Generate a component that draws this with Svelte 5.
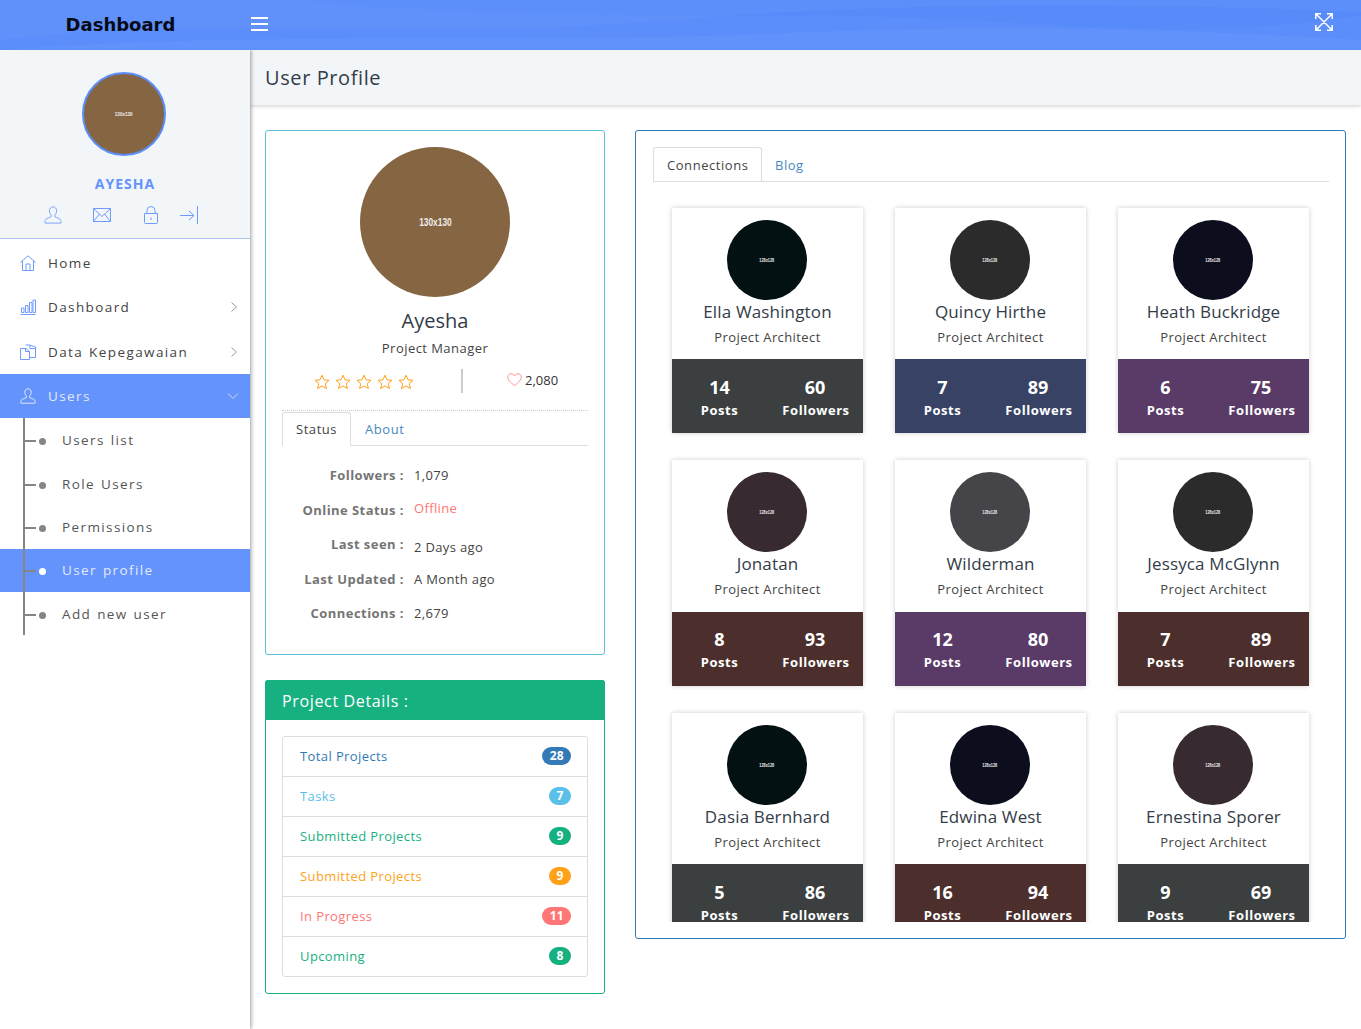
<script>
	const menu = [
		{ label: 'Home', icon: 'home' },
		{ label: 'Dashboard', icon: 'chart', arrow: true },
		{ label: 'Data Kepegawaian', icon: 'docs', arrow: true }
	];
	const subMenu = ['Users list', 'Role Users', 'Permissions', 'User profile', 'Add new user'];

	const info = [
		{ label: 'Followers :', value: '1,079' },
		{ label: 'Online Status :', value: 'Offline', cls: 'offline' },
		{ label: 'Last seen :', value: '2 Days ago', cls: 'low' },
		{ label: 'Last Updated :', value: 'A Month ago' },
		{ label: 'Connections :', value: '2,679' }
	];

	const projects = [
		{ label: 'Total Projects', count: 28, color: '#337ab7' },
		{ label: 'Tasks', count: 7, color: '#5bc0e8' },
		{ label: 'Submitted Projects', count: 9, color: '#17b081' },
		{ label: 'Submitted Projects', count: 9, color: '#ffa11a' },
		{ label: 'In Progress', count: 11, color: '#ff7676' },
		{ label: 'Upcoming', count: 8, color: '#17b081' }
	];

	const grey = '#3b3f40';
	const navy = '#374265';
	const plum = '#5a3a67';
	const brown = '#4c2f2c';
	const people = [
		{ name: 'Ella Washington', avatar: '#031112', posts: 14, followers: 60, bg: grey },
		{ name: 'Quincy Hirthe', avatar: '#2b2b2b', posts: 7, followers: 89, bg: navy },
		{ name: 'Heath Buckridge', avatar: '#0c0e1e', posts: 6, followers: 75, bg: plum },
		{ name: 'Jonatan', avatar: '#372a30', posts: 8, followers: 93, bg: brown },
		{ name: 'Wilderman', avatar: '#454449', posts: 12, followers: 80, bg: plum },
		{ name: 'Jessyca McGlynn', avatar: '#2b2b2b', posts: 7, followers: 89, bg: brown },
		{ name: 'Dasia Bernhard', avatar: '#031112', posts: 5, followers: 86, bg: grey },
		{ name: 'Edwina West', avatar: '#0c0e1e', posts: 16, followers: 94, bg: brown },
		{ name: 'Ernestina Sporer', avatar: '#372a30', posts: 9, followers: 69, bg: grey }
	];
</script>

{#snippet star()}
	<svg class="star" viewBox="0 0 16 16" width="16" height="16">
		<path d="M8 1.2l2 4.6 5 .5-3.8 3.3 1.2 4.9L8 12l-4.4 2.5 1.2-4.9L1 6.300l5-.5z" />
	</svg>
{/snippet}

{#snippet userIcon(size)}
	<svg class="line" viewBox="0 0 20 20" width={size} height={size}>
		<path d="M10 1c-2.600 0-4 1.900-4 4.300 0 2 .9 3.700 2 4.700v1.900c-1.800 1-6.300 2-6.800 4.200-.2.800 0 2.900 0 2.900h17.600s.2-2.100 0-2.900c-.5-2.200-5-3.200-6.800-4.200v-1.900c1.100-1 2-2.700 2-4.700 0-2.400-1.400-4.300-4-4.300z" />
	</svg>
{/snippet}

{#snippet menuIcon(name)}
	{#if name === 'home'}
		<svg class="line" viewBox="0 0 16 16" width="16" height="16">
			<path d="M.5 7.500L8 .8l7.500 6.700M2.500 6v9.500h11V6M6 15.500V9h4v6.500" />
		</svg>
	{:else if name === 'chart'}
		<svg class="line" viewBox="0 0 16 16" width="16" height="16">
			<path d="M.5 15.500h15M1.500 13.500V9h2.500v4.500zM5.500 13.500V6.500H8v7zM9.500 13.500V3.500H12v10zM13 13.500V1h2.500v12.500z" />
		</svg>
	{:else}
		<svg class="line" viewBox="0 0 16 16" width="16" height="16">
			<path d="M.5 4.500h5.500l3.500 3v8H.5zM5.500 1h4l6 2v10.500h-6M10 1v3.500h5.500M5.500 4.500V7.500h4" />
		</svg>
	{/if}
{/snippet}

<div class="page">
	<header class="topbar">
		<svg class="waves" viewBox="0 0 1361 50" preserveAspectRatio="none">
			<path d="M0 40C200 15 420 40 640 22S1100 0 1361 12V0H0z" fill="#fff" opacity="0.035" />
			<path d="M0 50C260 30 520 44 760 34s400-6 601 6v10z" fill="#fff" opacity="0.04" />
			<path d="M300 0C520 24 800 8 1000 22s260 6 361-6V0z" fill="#2f6cf5" opacity="0.05" />
		</svg>
		<div class="brand">Dashboard</div>
		<div class="burger"><span></span><span></span><span></span></div>
		<svg class="expand" viewBox="0 0 18 18" width="18" height="18">
			<path d="M1 1l16 16M17 1L1 17M.8 6V.8H6M12 .8h5.200V6M.8 12v5.200H6M17.200 12v5.200H12" />
		</svg>
	</header>

	<div class="main">
		<aside class="sidebar">
			<div class="userbox">
				<div class="avatar side-avatar"><span>130x130</span></div>
				<div class="username">AYESHA</div>
				<div class="usericons">
					{@render userIcon(18)}
					<svg class="line" viewBox="0 0 18 14" width="18" height="14">
						<path d="M.5.500h17v13H.5zM.5.500l8.500 8 8.500-8M.5 13.500l6-7.500M17.500 13.500l-6-7.500" />
					</svg>
					<svg class="line" viewBox="0 0 14 18" width="14" height="18">
						<path d="M.5 7.500h13v9a1 1 0 0 1-1 1h-11a1 1 0 0 1-1-1zM3 7.500V4.500a4 4 0 0 1 8 0v3M7 11.500v2.500" />
					</svg>
					<svg class="line" viewBox="0 0 18 18" width="18" height="18">
						<path d="M0 9.500h14M9 5l5 4.500-5 4.500M17.500 0v18" />
					</svg>
				</div>
			</div>
			<nav class="nav">
				{#each menu as item}
					<div class="nav-item">
						{@render menuIcon(item.icon)}
						<span>{item.label}</span>
						{#if item.arrow}
							<svg class="chev" viewBox="0 0 8 12" width="8" height="12"><path d="M1.500 1.500l5 4.500-5 4.500" /></svg>
						{/if}
					</div>
				{/each}
				<div class="nav-item active">
					{@render userIcon(16)}
					<span>Users</span>
					<svg class="chev down" viewBox="0 0 12 8" width="12" height="8"><path d="M1 1.500l5 5 5-5" /></svg>
				</div>
				<div class="sub">
					{#each subMenu as label}
						<div class="sub-item" class:current={label === 'User profile'}>
							<i class="tick"></i><i class="dot"></i>
							<span>{label}</span>
						</div>
					{/each}
				</div>
			</nav>
		</aside>

		<main class="content">
			<div class="titlebar"><h1>User Profile</h1></div>
			<div class="columns">
				<div class="left">
					<section class="card profile">
						<div class="avatar big-avatar"><span>130x130</span></div>
						<h2>Ayesha</h2>
						<p class="role">Project Manager</p>
						<div class="rating">
							<div class="stars">
								{#each [1, 2, 3, 4, 5] as _}
									{@render star()}
								{/each}
							</div>
							<div class="divider"></div>
							<div class="likes">
								<svg viewBox="0 0 16 16" width="15" height="15">
									<path d="M8 14.500C3 10.500.8 8.200.8 5.300.8 3.200 2.400 1.800 4.300 1.800c1.600 0 2.900.9 3.700 2.300.8-1.400 2.100-2.300 3.700-2.300 1.900 0 3.500 1.400 3.500 3.500 0 2.900-2.200 5.200-7.200 9.200z" />
								</svg>
								<span>2,080</span>
							</div>
						</div>
						<div class="tabs small">
							<div class="tab on">Status</div>
							<div class="tab">About</div>
						</div>
						<dl class="info">
							{#each info as row}
								<div class="info-row">
									<dt>{row.label}</dt>
									<dd class={row.cls}>{row.value}</dd>
								</div>
							{/each}
						</dl>
					</section>

					<section class="details">
						<div class="details-head">Project Details :</div>
						<div class="details-body">
							<ul>
								{#each projects as p}
									<li>
										<span style="color: {p.color}">{p.label}</span>
										<b style="background: {p.color}">{p.count}</b>
									</li>
								{/each}
							</ul>
						</div>
					</section>
				</div>

				<section class="connections">
					<div class="tabs">
						<div class="tab on">Connections</div>
						<div class="tab">Blog</div>
					</div>
					<div class="grid-clip">
						<div class="grid">
							{#each people as person}
								<article class="person">
									<div class="avatar person-avatar" style="background: {person.avatar}"><span>128x128</span></div>
									<h3>{person.name}</h3>
									<p>Project Architect</p>
									<div class="stats" style="background: {person.bg}">
										<div><strong>{person.posts}</strong><small>Posts</small></div>
										<div><strong>{person.followers}</strong><small>Followers</small></div>
									</div>
								</article>
							{/each}
						</div>
					</div>
				</section>
			</div>
		</main>
	</div>
</div>

<style>
	:global(body) {
		margin: 0;
		background: #fff;
		font-family: 'Open Sans', sans-serif;
		color: #313a46;
	}

	.page {
		width: 1361px;
		height: 1029px;
		overflow: hidden;
		display: flex;
		flex-direction: column;
	}

	.topbar {
		position: relative;
		z-index: 3;
		flex: none;
		height: 50px;
		background: #5b8dfb;
		display: flex;
		align-items: center;
		overflow: hidden;
	}

	.waves {
		position: absolute;
		inset: 0;
		width: 100%;
		height: 100%;
	}

	.brand {
		position: relative;
		width: 250px;
		box-sizing: border-box;
		text-align: center;
		padding-right: 9px;
		margin-top: -1px;
		font-family: 'DejaVu Sans', sans-serif;
		font-weight: 700;
		font-size: 18px;
		color: #060a17;
	}

	.burger {
		position: relative;
		width: 17px;
		margin-left: 1px;
		display: flex;
		flex-direction: column;
		gap: 4px;
		margin-top: -2px;
	}

	.burger span {
		height: 2px;
		background: #fff;
	}

	.expand {
		position: relative;
		margin-left: auto;
		margin-right: 28px;
		margin-top: -6px;
		fill: none;
		stroke: #fff;
		stroke-width: 1.5;
	}

	.main {
		flex: 1;
		display: flex;
		min-height: 0;
	}

	.sidebar {
		position: relative;
		z-index: 2;
		flex: none;
		width: 250px;
		background: #fff;
		box-shadow: 1px 0 4px rgba(0, 0, 0, 0.4);
	}

	.userbox {
		height: 189px;
		box-sizing: border-box;
		background: #f3f6f9;
		border-bottom: 1px solid #a9c0ec;
		padding-top: 22px;
		display: flex;
		flex-direction: column;
		align-items: center;
	}

	.avatar {
		flex: none;
		border-radius: 50%;
		display: flex;
		align-items: center;
		justify-content: center;
		box-sizing: border-box;
		color: #eee;
		background: #866642;
		font-family: 'Liberation Sans', sans-serif;
		font-weight: 700;
	}

	.avatar span {
		transform: scaleX(0.76);
	}

	.side-avatar {
		width: 84px;
		height: 84px;
		border: 2px solid #5b8dfb;
		font-size: 6px;
		margin-left: -2px;
	}

	.username {
		margin-top: 18px;
		font-weight: 700;
		font-size: 14px;
		line-height: 19px;
		letter-spacing: 1px;
		color: #6393fb;
	}

	.usericons {
		align-self: stretch;
		display: flex;
		align-items: center;
		padding-left: 44px;
		height: 18px;
		margin-top: 13px;
	}

	.usericons :global(svg:nth-child(2)) {
		margin-left: 31px;
	}

	.usericons :global(svg:nth-child(3)) {
		margin-left: 33px;
	}

	.usericons :global(svg:nth-child(4)) {
		margin-left: 22px;
	}

	.line {
		flex: none;
		fill: none;
		stroke: #6f9bfb;
		stroke-width: 1;
	}

	.nav {
		padding-top: 2px;
	}

	.nav-item {
		height: 44.3px;
		display: flex;
		align-items: center;
		padding: 0 12px 0 20px;
		font-size: 13.500px;
		letter-spacing: 1.400px;
		word-spacing: 1px;
		color: #444;
	}

	.nav-item span {
		margin-left: 12px;
	}

	.chev {
		margin-left: auto;
		fill: none;
		stroke: #999;
		stroke-width: 1;
	}

	.nav-item.active {
		background: #6493fb;
		color: #e3e9fb;
	}

	.nav-item.active .line {
		stroke: #fff;
	}

	.chev.down {
		stroke: #cfdcfb;
		margin-right: -1px;
	}

	.sub {
		position: relative;
		padding-top: 0.400px;
	}

	.sub::before {
		content: '';
		position: absolute;
		z-index: 1;
		left: 23px;
		top: 0;
		bottom: 1px;
		width: 2px;
		background: #858585;
	}

	.sub-item {
		height: 43.4px;
		display: flex;
		align-items: center;
		padding-left: 24px;
		font-size: 13.500px;
		letter-spacing: 1.400px;
		word-spacing: 1px;
		color: #555;
	}

	.sub-item span {
		margin-left: 16px;
	}

	.tick {
		width: 12px;
		height: 1px;
		border-top: 2px solid #858585;
		margin-top: 2px;
		box-sizing: border-box;
	}

	.dot {
		width: 7px;
		height: 7px;
		margin-left: 3px;
		margin-top: 3px;
		border-radius: 50%;
		background: #858585;
	}

	.sub-item.current {
		background: #6493fb;
		color: #e3e9fb;
		position: relative;
	}

	.sub-item.current .dot {
		background: #fff;
	}

	.content {
		flex: 1;
		min-width: 0;
	}

	.titlebar {
		height: 55px;
		background: #f3f6f9;
		display: flex;
		align-items: center;
		padding-left: 15px;
		box-shadow: 0 1px 4px rgba(0, 0, 0, 0.2);
	}

	h1 {
		margin: 0;
		font-size: 20px;
		font-weight: 400;
		letter-spacing: 0.6px;
		color: #333c48;
	}

	.columns {
		display: flex;
		align-items: flex-start;
		gap: 30px;
		padding: 25px 15px 0;
	}

	.left {
		flex: none;
		width: 340px;
		display: flex;
		flex-direction: column;
		gap: 25px;
	}

	.card {
		box-sizing: border-box;
		border: 1px solid #5bc0de;
		border-radius: 3px;
	}

	.profile {
		height: 525px;
		padding: 16px;
		display: flex;
		flex-direction: column;
		align-items: center;
	}

	.big-avatar {
		width: 150px;
		height: 150px;
		font-size: 11px;
	}

	h2 {
		margin: 10px 0 0;
		font-size: 20px;
		line-height: 27px;
		font-weight: 400;
		color: #333c48;
	}

	.role {
		margin: 5px 0 0;
		font-size: 13px;
		line-height: 18px;
		letter-spacing: 0.45px;
		color: #444;
	}

	.rating {
		align-self: stretch;
		display: flex;
		align-items: center;
		margin-top: 12px;
		height: 24px;
	}

	.stars {
		display: flex;
		gap: 5px;
		margin-left: 32px;
		margin-top: 1px;
	}

	.star {
		fill: none;
		stroke: #ffa11a;
		stroke-width: 1;
	}

	.divider {
		width: 2px;
		height: 24px;
		background: #ccc;
		margin-left: 47px;
	}

	.likes {
		display: flex;
		align-items: center;
		gap: 3px;
		margin-left: 44px;
		margin-top: -3px;
		font-size: 13px;
		color: #333;
	}

	.likes svg {
		fill: none;
		stroke: #ff8c8c;
		stroke-width: 1;
	}

	.tabs {
		align-self: stretch;
		display: flex;
		border-bottom: 1px solid #ddd;
		height: 35px;
		box-sizing: border-box;
		font-size: 13px;
		letter-spacing: 0.55px;
	}

	.tabs.small {
		margin-top: 19px;
		height: 34px;
		position: relative;
	}

	.tabs.small::before {
		content: '';
		position: absolute;
		left: 0;
		right: 0;
		top: -2px;
		border-top: 1px dotted #ccc;
	}

	.tab {
		padding: 0 13px;
		line-height: 37px;
		color: #4a88c2;
	}

	.tabs.small .tab {
		line-height: 34px;
	}

	.tabs.small .tab + .tab {
		padding-left: 14px;
	}

	.tab.on {
		color: #444;
		background: #fff;
		height: 100%;
		line-height: 35px;
		padding-right: 12.500px;
		box-sizing: border-box;
		border: 1px solid #ddd;
		border-bottom: 0;
		border-radius: 3px 3px 0 0;
	}

	.tabs.small .tab.on {
		height: 34px;
		line-height: 32px;
		padding-right: 13px;
	}

	.info {
		align-self: stretch;
		margin: 12px 0 0;
	}

	.info-row {
		height: 34.500px;
		display: flex;
		align-items: center;
		font-size: 13px;
	}

	dt {
		width: 122px;
		text-align: right;
		font-weight: 700;
		letter-spacing: 0.45px;
		color: #757575;
	}

	dd {
		margin: 0 0 0 10px;
		letter-spacing: 0.35px;
		color: #444;
	}

	dd.offline {
		color: #ff7676;
		margin-top: -4px;
	}

	dd.low {
		margin-top: 5px;
	}

	.details {
		height: 314px;
		box-sizing: border-box;
		border: 1px solid #17b081;
		border-radius: 3px;
	}

	.details-head {
		height: 40px;
		margin: -1px -1px 0;
		background: #17b081;
		border-radius: 3px 3px 0 0;
		padding-left: 17px;
		line-height: 42px;
		font-size: 16px;
		letter-spacing: 0.65px;
		color: #fff;
	}

	.details-body {
		padding: 16px;
	}

	ul {
		list-style: none;
		margin: 0;
		padding: 0;
		border: 1px solid #ddd;
		border-radius: 3px;
	}

	li {
		height: 40px;
		box-sizing: border-box;
		display: flex;
		align-items: center;
		justify-content: space-between;
		padding: 0 16px 0 17px;
		border-bottom: 1px solid #ddd;
		font-size: 13px;
		letter-spacing: 0.4px;
	}

	li:last-child {
		border-bottom: 0;
		height: 39px;
	}

	li span {
		margin-top: -2px;
	}

	li b {
		min-width: 22px;
		height: 18px;
		box-sizing: border-box;
		padding: 0 7.500px;
		border-radius: 10px;
		font-size: 12px;
		line-height: 17px;
		letter-spacing: 0;
		text-align: center;
		color: #fff;
		margin-top: -2px;
	}

	.connections {
		flex: none;
		width: 711px;
		height: 809px;
		box-sizing: border-box;
		border: 1px solid #337ab7;
		border-radius: 3px;
		padding: 16px 16px 0 17px;
	}

	.grid-clip {
		height: 740px;
		overflow: hidden;
		padding-top: 25.600px;
		box-sizing: border-box;
	}

	.grid {
		display: grid;
		grid-template-columns: repeat(3, 191px);
		column-gap: 32px;
		row-gap: 26.900px;
		padding-left: 19px;
	}

	.person {
		height: 225.600px;
		box-sizing: border-box;
		padding-top: 12px;
		background: #fff;
		display: flex;
		flex-direction: column;
		align-items: center;
		box-shadow: 0 0 5px rgba(0, 0, 0, 0.2);
	}

	.person-avatar {
		width: 80px;
		height: 80px;
		font-size: 5px;
		margin-left: -1px;
	}

	h3 {
		margin: 0.400px 0 0;
		font-size: 17px;
		line-height: 24px;
		font-weight: 400;
		letter-spacing: 0.15px;
		color: #333c48;
	}

	.person p {
		margin: 4px 0 0;
		font-size: 13px;
		line-height: 18px;
		letter-spacing: 0.4px;
		color: #444;
	}

	.stats {
		align-self: stretch;
		margin-top: auto;
		height: 74px;
		display: grid;
		grid-template-columns: 95px 96px;
		color: #fff;
		text-align: center;
		padding-top: 15.700px;
		box-sizing: border-box;
	}

	.stats strong {
		display: block;
		font-size: 18px;
		line-height: 25px;
	}

	.stats small {
		display: block;
		margin-top: 1px;
		font-size: 13px;
		line-height: 18px;
		font-weight: 700;
		letter-spacing: 0.55px;
	}

	.stats div + div small {
		padding-left: 2px;
	}
</style>
